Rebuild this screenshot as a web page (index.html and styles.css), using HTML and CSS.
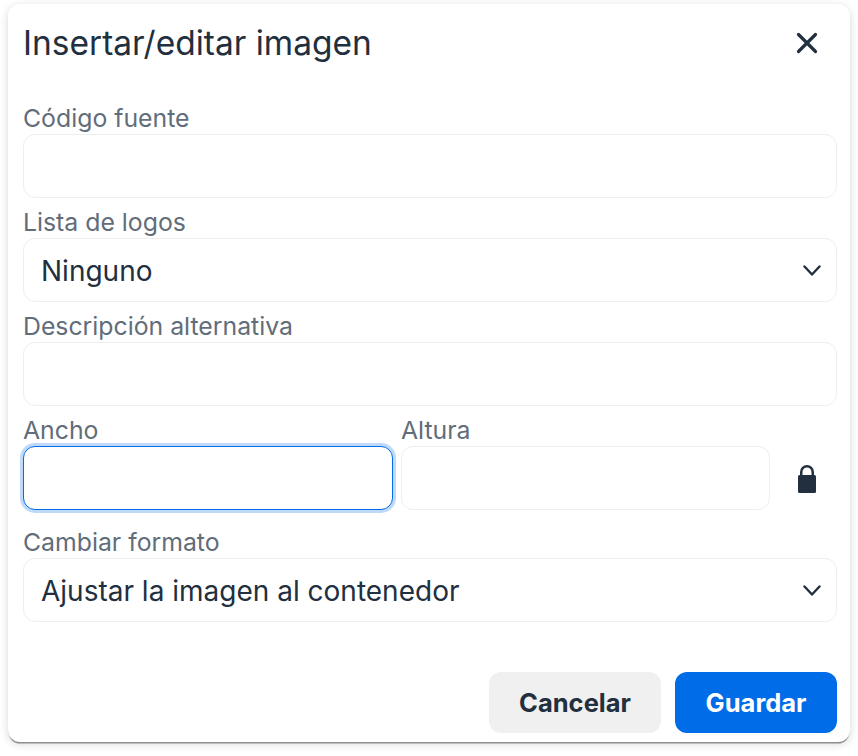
FILE: index.html
```html
<!DOCTYPE html>
<html lang="es">
<head>
<meta charset="utf-8">
<title>Insertar/editar imagen</title>
<link rel="stylesheet" href="styles.css">
</head>
<body>
<div class="dialog">
  <header class="head">
    <h1 class="title">Insertar/editar imagen</h1>
    <svg class="close" width="24" height="24" viewBox="0 0 24 24"><path d="M3.500 3.500 20.500 20.500M20.500 3.500 3.500 20.500" fill="none" stroke="#222f3e" stroke-width="3.200" stroke-linecap="round"/></svg>
  </header>
  <main class="body">
    <div class="field">
      <label class="label">Código fuente</label>
      <div class="input"></div>
    </div>
    <div class="field">
      <label class="label">Lista de logos</label>
      <div class="input select"><span>Ninguno</span>
        <svg class="chev" width="18" height="12" viewBox="0 0 18 12"><path d="M1.500 1.500 9 9.500 16.500 1.500" fill="none" stroke="#222f3e" stroke-width="2.400" stroke-linecap="round" stroke-linejoin="round"/></svg>
      </div>
    </div>
    <div class="field">
      <label class="label">Descripción alternativa</label>
      <div class="input"></div>
    </div>
    <div class="size-row">
      <div class="field first">
        <label class="label">Ancho</label>
        <div class="input focused"></div>
      </div>
      <div class="field second">
        <label class="label">Altura</label>
        <div class="input"></div>
      </div>
      <div class="lock-cell">
        <svg width="20" height="28" viewBox="0 0 20 28"><path d="M4.250 12V7a5.750 5.750 0 0 1 11.500 0V12" fill="none" stroke="#222f3e" stroke-width="2.500"/><rect x="1" y="10" width="18" height="18" rx="1.500" fill="#222f3e"/></svg>
      </div>
    </div>
    <div class="field">
      <label class="label">Cambiar formato</label>
      <div class="input select"><span>Ajustar la imagen al contenedor</span>
        <svg class="chev" width="18" height="12" viewBox="0 0 18 12"><path d="M1.500 1.500 9 9.500 16.500 1.500" fill="none" stroke="#222f3e" stroke-width="2.400" stroke-linecap="round" stroke-linejoin="round"/></svg>
      </div>
    </div>
  </main>
  <footer class="foot">
    <button class="btn cancel">Cancelar</button>
    <button class="btn save">Guardar</button>
  </footer>
</div>
</body>
</html>
```
FILE: styles.css
```css
html, body { margin: 0; padding: 0; background: #fff; }
body { width: 858px; height: 756px; overflow: hidden; font-family: Inter, "Liberation Sans", sans-serif; color: #222f3e; }
.dialog {
  box-sizing: border-box; width: 842px; height: 738px; margin: 4px 0 0 8px;
  background: #fff; border-radius: 12px; display: flex; flex-direction: column;
  padding: 0 13px 9px 15px;
  box-shadow: 0 2px 0 -0.5px #8f8f8f, 0 2px 9px rgba(0,0,0,.16);
}
.head { display: flex; justify-content: space-between; align-items: center; height: 78px; }
.title { margin: 0; font-size: 33.500px; font-weight: 400; line-height: 78px; }
.close { margin-right: 18px; }
.body { display: flex; flex-direction: column; gap: 8px; margin-top: 20px; }
.field { display: flex; flex-direction: column; }
.label { height: 32px; line-height: 32px; font-size: 24.800px; color: #626d7a; }
.input {
  box-sizing: border-box; height: 64px; border: 1px solid #eceef0; border-radius: 12px; background: #fff;
}
.select { display: flex; align-items: center; justify-content: space-between; padding: 2px 15px 0 17px; font-size: 28px; }
.focused { border-color: #006ce7; box-shadow: 0 0 0 3px #bfd9f8; }
.size-row { display: flex; align-items: flex-end; margin-bottom: 8px; }
.first { width: 370px; margin-right: 8px; }
.second { width: 369px; }
.lock-cell { flex: 1; height: 64px; display: flex; align-items: center; justify-content: center; padding: 2px 0 0 6px; box-sizing: border-box; }
.foot { display: flex; justify-content: flex-end; gap: 14px; margin-top: auto; }
.btn { height: 61px; border: 0; border-radius: 12px; font: 700 25.500px Inter, "Liberation Sans", sans-serif; }
.cancel { width: 172px; background: #f0f0f0; color: #222f3e; }
.save { width: 162px; background: #006ce7; color: #fff; }
```
